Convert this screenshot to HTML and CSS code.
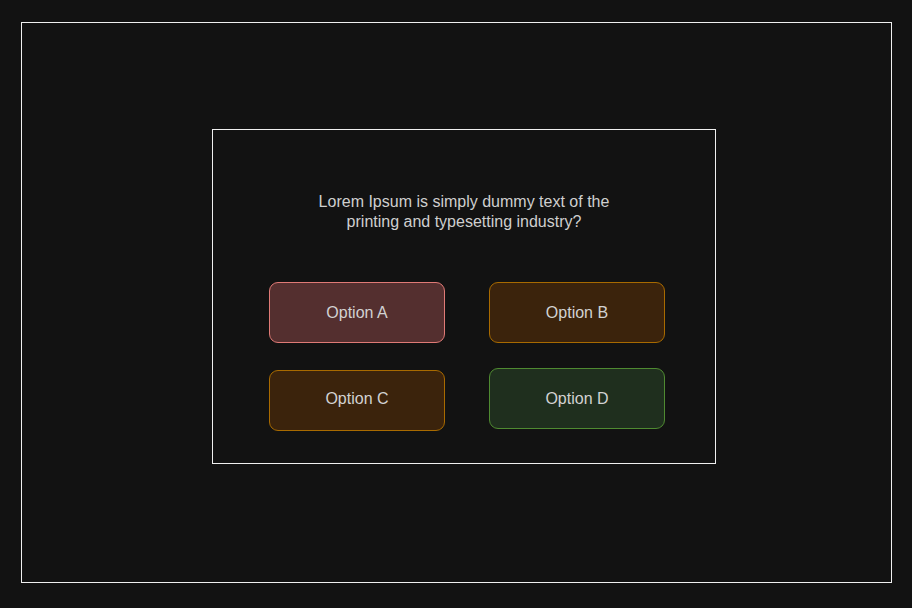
FILE: index.html
```html
<!DOCTYPE html>
<html>
<head>
<meta charset="utf-8">
<link rel="stylesheet" href="styles.css">
</head>
<body>
<div class="outer">
  <div class="card">
    <p class="question">Lorem Ipsum is simply dummy text of the<br>printing and typesetting industry?</p>
    <div class="options">
      <div class="opt opt-red">Option A</div>
      <div class="opt opt-orange">Option B</div>
      <div class="opt opt-orange opt-c">Option C</div>
      <div class="opt opt-green opt-d">Option D</div>
    </div>
  </div>
</div>
</body>
</html>
```
FILE: styles.css
```css
html, body {
  margin: 0;
  padding: 0;
  background: #121212;
}
body {
  width: 912px;
  height: 608px;
  overflow: hidden;
  font-family: "Liberation Sans", Arial, sans-serif;
  color: #d0d0d0;
}
.outer {
  box-sizing: border-box;
  margin: 22px 0 0 21px;
  width: 871px;
  height: 561px;
  border: 1px solid #f0f0f0;
  padding: 106px 0 0 190px;
}
.card {
  box-sizing: border-box;
  width: 504px;
  height: 335px;
  border: 1px solid #f0f0f0;
  padding-top: 62px;
}
.question {
  margin: 0;
  text-align: center;
  font-size: 16px;
  line-height: 20px;
  color: #cfcfcf;
}
.options {
  display: grid;
  grid-template-columns: 176px 176px;
  column-gap: 44px;
  row-gap: 27px;
  margin: 50px 0 0 56px;
}
.opt {
  box-sizing: border-box;
  height: 61px;
  border: 1px solid;
  border-radius: 9px;
  display: flex;
  align-items: center;
  justify-content: center;
  font-size: 16px;
  color: #d2d2d2;
}
.opt-red {
  background: #542f2f;
  border-color: #e07a76;
}
.opt-orange {
  background: #3b230c;
  border-color: #a86a00;
}
.opt-green {
  background: #1f2f1e;
  border-color: #4f8a31;
}
.opt-c {
  padding-bottom: 3px;
}
.opt-d {
  margin-top: -2px;
}
```
